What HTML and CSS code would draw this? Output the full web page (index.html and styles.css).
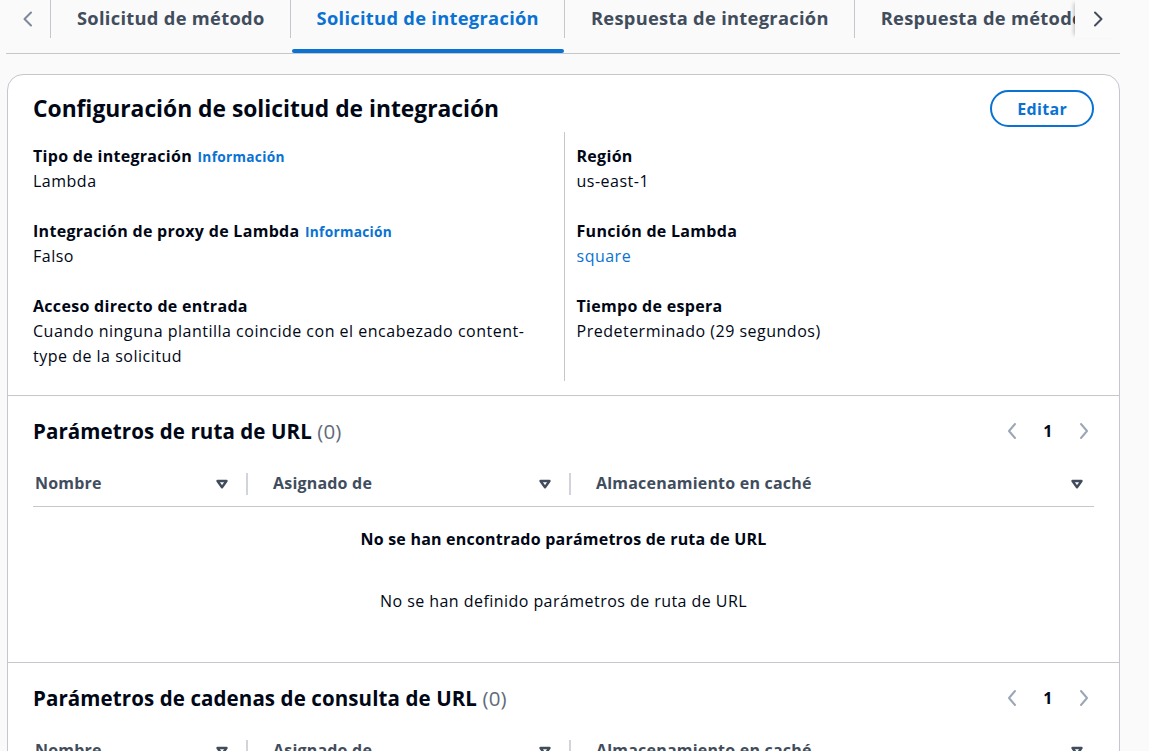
FILE: index.html
```html
<!DOCTYPE html>
<html lang="es">
<head>
<meta charset="utf-8">
<title>Solicitud de integración</title>
<link rel="stylesheet" href="styles.css">
</head>
<body>
<div class="page">
  <div class="tabs">
    <button class="tab-nav tab-nav-left" aria-label="Anterior">
      <svg width="16" height="16" viewBox="0 0 16 16"><path d="M11 1.5 4.5 8l6.5 6.5"/></svg>
    </button>
    <div class="tab-list">
      <div class="tab"><span class="tab-label">Solicitud de método</span><span class="tab-underline"></span></div>
      <div class="tab active"><span class="tab-label">Solicitud de integración</span><span class="tab-underline"></span></div>
      <div class="tab"><span class="tab-label">Respuesta de integración</span><span class="tab-underline"></span></div>
      <div class="tab"><span class="tab-label">Respuesta de método</span><span class="tab-underline"></span></div>
    </div>
    <button class="tab-nav tab-nav-right" aria-label="Siguiente">
      <svg width="16" height="16" viewBox="0 0 16 16"><path d="M5 1.5 11.5 8 5 14.5"/></svg>
    </button>
  </div>

  <div class="card">
    <section class="config">
      <div class="config-header">
        <h2 class="heading heading-main">Configuración de solicitud de integración</h2>
        <button class="btn">Editar</button>
      </div>
      <div class="kv-grid">
        <div class="kv-col">
          <div class="kv">
            <div class="kv-label">Tipo de integración <a class="info">Información</a></div>
            <div class="kv-value">Lambda</div>
          </div>
          <div class="kv">
            <div class="kv-label">Integración de proxy de Lambda <a class="info">Información</a></div>
            <div class="kv-value">Falso</div>
          </div>
          <div class="kv">
            <div class="kv-label">Acceso directo de entrada</div>
            <div class="kv-value">Cuando ninguna plantilla coincide con el encabezado content-type de la solicitud</div>
          </div>
        </div>
        <div class="kv-col kv-col-right">
          <div class="kv">
            <div class="kv-label">Región</div>
            <div class="kv-value">us-east-1</div>
          </div>
          <div class="kv">
            <div class="kv-label">Función de Lambda</div>
            <div class="kv-value"><a class="link">square</a></div>
          </div>
          <div class="kv">
            <div class="kv-label">Tiempo de espera</div>
            <div class="kv-value">Predeterminado (29 segundos)</div>
          </div>
        </div>
      </div>
    </section>

    <section class="table-section">
      <div class="table-header">
        <h2 class="heading">Parámetros de ruta de URL <span class="counter">(0)</span></h2>
        <div class="pagination">
          <svg class="pg-arrow" width="14" height="18" viewBox="0 0 14 18"><path d="M10 2 4 9l6 7"/></svg>
          <span class="pg-num">1</span>
          <svg class="pg-arrow" width="14" height="18" viewBox="0 0 14 18"><path d="M4 2l6 7-6 7"/></svg>
        </div>
      </div>
      <div class="table">
        <div class="thead">
          <div class="th th-first"><span class="th-text">Nombre</span><svg class="sort" width="14" height="10" viewBox="0 0 14 10"><path d="M2.5 2h9L7 8.2z"/></svg><span class="th-sep"></span></div>
          <div class="th"><span class="th-text">Asignado de</span><svg class="sort" width="14" height="10" viewBox="0 0 14 10"><path d="M2.5 2h9L7 8.2z"/></svg><span class="th-sep"></span></div>
          <div class="th th-last"><span class="th-text">Almacenamiento en caché</span><svg class="sort" width="14" height="10" viewBox="0 0 14 10"><path d="M2.5 2h9L7 8.2z"/></svg></div>
        </div>
        <div class="empty">
          <div class="empty-title">No se han encontrado parámetros de ruta de URL</div>
          <div class="empty-text">No se han definido parámetros de ruta de URL</div>
        </div>
      </div>
    </section>

    <section class="table-section">
      <div class="table-header">
        <h2 class="heading">Parámetros de cadenas de consulta de URL <span class="counter">(0)</span></h2>
        <div class="pagination">
          <svg class="pg-arrow" width="14" height="18" viewBox="0 0 14 18"><path d="M10 2 4 9l6 7"/></svg>
          <span class="pg-num">1</span>
          <svg class="pg-arrow" width="14" height="18" viewBox="0 0 14 18"><path d="M4 2l6 7-6 7"/></svg>
        </div>
      </div>
      <div class="table">
        <div class="thead">
          <div class="th th-first"><span class="th-text">Nombre</span><svg class="sort" width="14" height="10" viewBox="0 0 14 10"><path d="M2.5 2h9L7 8.2z"/></svg><span class="th-sep"></span></div>
          <div class="th"><span class="th-text">Asignado de</span><svg class="sort" width="14" height="10" viewBox="0 0 14 10"><path d="M2.5 2h9L7 8.2z"/></svg><span class="th-sep"></span></div>
          <div class="th th-last"><span class="th-text">Almacenamiento en caché</span><svg class="sort" width="14" height="10" viewBox="0 0 14 10"><path d="M2.5 2h9L7 8.2z"/></svg></div>
        </div>
        <div class="empty">
          <div class="empty-title">No se han encontrado parámetros de cadenas de consulta de URL</div>
          <div class="empty-text">No se han definido parámetros de cadenas de consulta de URL</div>
        </div>
      </div>
    </section>
  </div>
</div>
</body>
</html>
```

FILE: styles.css
```css
* { box-sizing: border-box; }

html, body {
  margin: 0;
  padding: 0;
  background: #fafafa;
  font-family: "Open Sans", "Noto Sans", Arial, sans-serif;
  color: #000716;
  font-size: 16px;
  line-height: 25px;
  letter-spacing: 0.5px;
  overflow: hidden;
}

.page {
  padding: 0 29px 0 6px;
}

/* Tabs */
.tabs {
  display: flex;
  height: 54px;
  border-bottom: 1px solid #c6c6cd;
}

.tab-nav {
  border: 0;
  background: transparent;
  padding: 0;
  margin: 0;
  height: 38px;
  display: flex;
  align-items: center;
  justify-content: center;
  flex: none;
}

.tab-nav svg path {
  fill: none;
  stroke-width: 2;
  stroke-linecap: round;
  stroke-linejoin: round;
}

.tab-nav-left { width: 44px; }
.tab-nav-left svg path { stroke: #7d8998; }

.tab-nav-right {
  width: 45px;
  background: #fafafa;
  box-shadow: -4px 0 4px -3px rgba(0, 7, 22, 0.25);
}
.tab-nav-right svg path { stroke: #414d5c; }

.tab-list {
  display: flex;
  flex: 1;
  overflow: hidden;
  min-width: 0;
}

.tab {
  display: flex;
  flex-direction: column;
  flex: none;
}

.tab-label {
  display: block;
  height: 38px;
  padding: 5px 25px 0 26px;
  border-left: 1px solid #c6c6cd;
  font-size: 18.3px;
  font-weight: 700;
  line-height: 26px;
  color: #414d5c;
  white-space: nowrap;
  letter-spacing: 0.3px;
}

.tab-underline {
  display: block;
  height: 4px;
  margin: 11px 0 0 2px;
  border-radius: 2px;
}

.tab.active .tab-label { color: #0972d3; }
.tab.active .tab-underline { background: #0972d3; }

/* Card */
.card {
  margin: 20px 0 0 1px;
  background: #ffffff;
  border: 1px solid #c6c6cd;
  border-radius: 16px;
  height: 720px;
}

.heading {
  margin: 0;
  font-size: 20.5px;
  line-height: 26px;
  font-weight: 700;
  color: #000716;
  letter-spacing: 0.1px;
}

.heading-main {
  font-size: 22.8px;
  line-height: 28px;
  letter-spacing: 0;
}

.counter {
  font-weight: 400;
  color: #5f6b7a;
}

.config {
  padding: 15px 25px 14px 25px;
  border-bottom: 1px solid #c6c6cd;
}

.config-header {
  display: flex;
  justify-content: space-between;
  align-items: center;
  height: 37px;
}

.btn {
  height: 37px;
  padding: 0 25px;
  border: 2px solid #0972d3;
  border-radius: 20px;
  background: #ffffff;
  color: #0972d3;
  font-family: inherit;
  font-size: 16px;
  font-weight: 700;
  line-height: 20px;
  letter-spacing: 0.3px;
}

.kv-grid {
  display: grid;
  grid-template-columns: 1fr 1fr;
  margin-top: 5px;
}

.kv-col {
  display: flex;
  flex-direction: column;
  gap: 25px;
  padding: 12px 22px 12px 0;
}

.kv-col-right {
  border-left: 1px solid #c6c6cd;
  padding-left: 12px;
}

.kv-label {
  font-weight: 700;
  letter-spacing: 0.3px;
}

.info {
  font-size: 13.7px;
  font-weight: 700;
  color: #0972d3;
  margin-left: 1px;
  letter-spacing: 0.3px;
}

.link { color: #0972d3; }

/* Table sections */
.table-section {
  padding: 22px 25px 0 25px;
  border-bottom: 1px solid #c6c6cd;
}

.table-header {
  display: flex;
  justify-content: space-between;
  align-items: center;
  height: 26px;
}

.pagination {
  display: flex;
  align-items: center;
  gap: 24px;
  padding-right: 3px;
}

.pg-arrow path {
  fill: none;
  stroke: #9ba7b6;
  stroke-width: 2;
  stroke-linecap: round;
  stroke-linejoin: round;
}

.pg-num {
  font-weight: 700;
  font-size: 16px;
  color: #000716;
}

.table {
  margin-top: 27px;
}

.thead {
  display: grid;
  grid-template-columns: 215px 323px 1fr;
  border-bottom: 1px solid #c6c6cd;
  padding-bottom: 10px;
}

.th {
  display: flex;
  align-items: center;
  padding-left: 25px;
  font-weight: 700;
  color: #414d5c;
  height: 25px;
  letter-spacing: 0.2px;
}

.th-first { padding-left: 2px; }
.th-last { padding-right: 10px; }

.th-text { flex: 1; white-space: nowrap; }

.sort path {
  fill: none;
  stroke: #414d5c;
  stroke-width: 2.4;
  stroke-linejoin: round;
}

.th-sep {
  width: 2px;
  height: 22px;
  background: #d1d5db;
  margin-left: 17px;
}

.empty {
  text-align: center;
  padding: 20px 0 48px;
}

.empty-title {
  font-weight: 700;
  letter-spacing: 0.22px;
}

.empty-text {
  margin-top: 37px;
  letter-spacing: 0.45px;
}
```
